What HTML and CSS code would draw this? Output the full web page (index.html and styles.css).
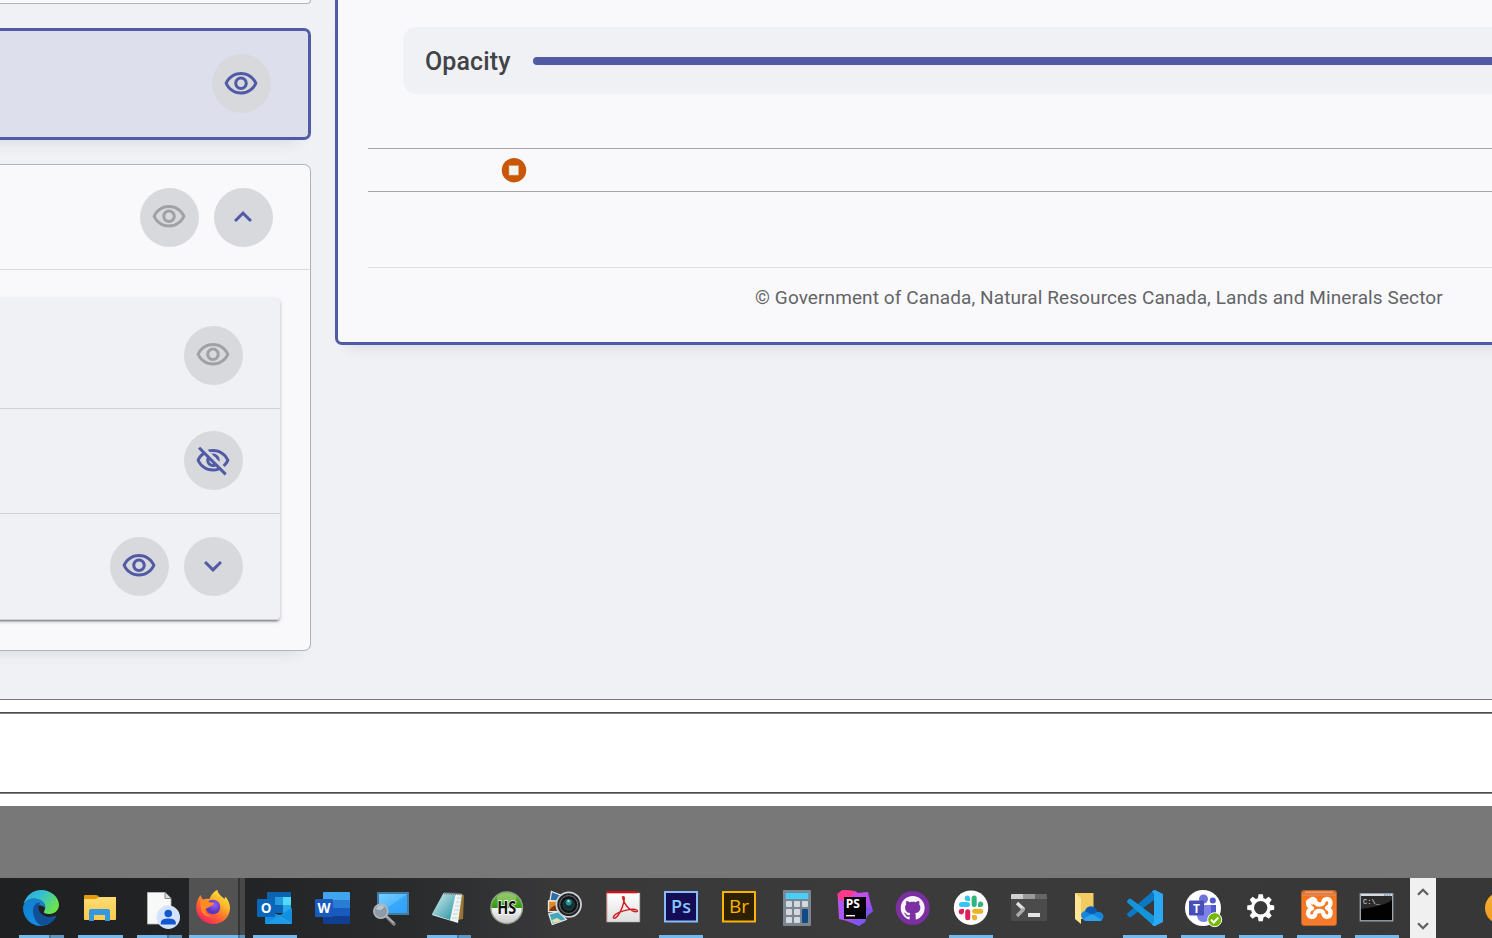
FILE: index.html
```html
<!DOCTYPE html>
<html lang="en">
<head>
<meta charset="utf-8">
<title>Layers</title>
<link rel="stylesheet" href="styles.css">
</head>
<body>
<svg class="defs" aria-hidden="true">
  <defs>
    <symbol id="eye" viewBox="0 0 24 24"><path d="M12 6c3.790 0 7.170 2.130 8.820 5.500C19.170 14.870 15.790 17 12 17s-7.170-2.130-8.820-5.500C4.830 8.130 8.210 6 12 6m0-2C7 4 2.730 7.110 1 11.500 2.730 15.890 7 19 12 19s9.270-3.110 11-7.500C21.270 7.110 17 4 12 4zm0 5c1.380 0 2.500 1.120 2.500 2.500S13.380 14 12 14s-2.500-1.120-2.500-2.500S10.620 9 12 9m0-2c-2.480 0-4.500 2.020-4.500 4.500S9.520 16 12 16s4.500-2.020 4.500-4.500S14.480 7 12 7z"/></symbol>
    <symbol id="eye-off" viewBox="0 0 24 24"><path d="M12 6c3.790 0 7.170 2.130 8.820 5.500-.59 1.220-1.420 2.270-2.410 3.120l1.410 1.410c1.390-1.230 2.490-2.770 3.180-4.530C21.270 7.110 17 4 12 4c-1.270 0-2.490.2-3.640.57l1.650 1.650C10.660 6.090 11.320 6 12 6zm-1.070 1.140L13 9.210c.57.25 1.030.71 1.280 1.280l2.070 2.070c.08-.34.14-.7.14-1.070C16.500 9.010 14.480 7 12 7c-.37 0-.72.05-1.070.14zM2.010 3.870l2.680 2.680C3.060 7.830 1.770 9.530 1 11.500 2.730 15.890 7 19 12 19c1.520 0 2.980-.29 4.320-.82l3.420 3.420 1.410-1.410L3.420 2.450 2.010 3.870zm7.500 7.500l2.610 2.610c-.04.01-.08.02-.12.02-1.380 0-2.500-1.120-2.500-2.500 0-.05.01-.08.01-.13zm-3.400-3.400l1.750 1.750c-.23.55-.36 1.150-.36 1.780 0 2.480 2.020 4.500 4.500 4.500.63 0 1.230-.13 1.770-.36l.98.98c-.88.24-1.800.38-2.750.38-3.790 0-7.170-2.130-8.820-5.500.7-1.430 1.720-2.610 2.930-3.530z"/></symbol>
    <symbol id="less" viewBox="0 0 24 24"><path d="M12 8l-6 6 1.410 1.410L12 10.830l4.590 4.580L18 14z"/></symbol>
    <symbol id="more" viewBox="0 0 24 24"><path d="M16.590 8.590 12 13.170 7.410 8.590 6 10l6 6 6-6z"/></symbol>
    <linearGradient id="edgeTop" x1="0" y1="0" x2="1" y2=".5"><stop offset="0" stop-color="#2ba5e8"/><stop offset=".5" stop-color="#35c1cf"/><stop offset="1" stop-color="#6be34c"/></linearGradient>
    <linearGradient id="edgeLow" x1="0" y1="0" x2=".3" y2="1"><stop offset="0" stop-color="#1380cc"/><stop offset="1" stop-color="#128be0"/></linearGradient>
    <linearGradient id="folder" x1="0" y1="0" x2="0" y2="1"><stop offset="0" stop-color="#ffdc73"/><stop offset="1" stop-color="#fbca4b"/></linearGradient>
    <linearGradient id="fox" x1=".9" y1="0" x2=".2" y2="1"><stop offset="0" stop-color="#fff04a"/><stop offset=".35" stop-color="#ffb52a"/><stop offset=".62" stop-color="#ff6a30"/><stop offset="1" stop-color="#f01a68"/></linearGradient>
    <radialGradient id="foxGlobe" cx=".6" cy=".35"><stop offset="0" stop-color="#9a5cf2"/><stop offset="1" stop-color="#5a37bb"/></radialGradient>
    <linearGradient id="screen" x1="0" y1="0" x2="1" y2="1"><stop offset="0" stop-color="#74cdff"/><stop offset=".5" stop-color="#55b9fb"/><stop offset=".51" stop-color="#39a9fb"/><stop offset="1" stop-color="#2f9ffa"/></linearGradient>
    <linearGradient id="note" x1="0" y1="0" x2="1" y2="1"><stop offset="0" stop-color="#d9f2f3"/><stop offset="1" stop-color="#2591a0"/></linearGradient>
    <linearGradient id="green" x1="0" y1="0" x2="0" y2="1"><stop offset="0" stop-color="#6fb53c"/><stop offset=".5" stop-color="#2f9c0f"/><stop offset=".51" stop-color="#f5f5f5"/><stop offset="1" stop-color="#c9c9c9"/></linearGradient>
    <linearGradient id="paper" x1="0" y1="0" x2="0" y2="1"><stop offset="0" stop-color="#fff"/><stop offset="1" stop-color="#dedede"/></linearGradient>
    <linearGradient id="storm" x1="0" y1="0" x2="1" y2="1"><stop offset="0" stop-color="#ff318c"/><stop offset=".4" stop-color="#c450f0"/><stop offset="1" stop-color="#7748f5"/></linearGradient>
    <linearGradient id="orange" x1="0" y1="0" x2="0" y2="1"><stop offset="0" stop-color="#c9662a"/><stop offset=".14" stop-color="#e98747"/><stop offset=".17" stop-color="#f7751d"/><stop offset="1" stop-color="#f47c2d"/></linearGradient>
    <linearGradient id="sun" x1="0" y1="0" x2="0" y2="1"><stop offset="0" stop-color="#f2b035"/><stop offset="1" stop-color="#f39a1c"/></linearGradient>
  </defs>
</svg>

<main class="viewer">
  <section class="layers">
    <div class="card card-cut"></div>
    <div class="card card-selected">
      <button class="round"><svg class="glyph glyph-level"><use href="#eye"/></svg></button>
    </div>
    <div class="card card-group">
      <div class="group-head">
        <button class="round off"><svg class="glyph"><use href="#eye"/></svg></button>
        <button class="round"><svg class="glyph"><use href="#less"/></svg></button>
      </div>
      <div class="sublist">
        <div class="row"><button class="round off"><svg class="glyph"><use href="#eye"/></svg></button></div>
        <div class="row row-mid"><button class="round"><svg class="glyph glyph-level"><use href="#eye-off"/></svg></button></div>
        <div class="row row-last">
          <button class="round"><svg class="glyph"><use href="#eye"/></svg></button>
          <button class="round"><svg class="glyph"><use href="#more"/></svg></button>
        </div>
      </div>
    </div>
  </section>

  <section class="details">
    <div class="opacity"><span class="opacity-label">Opacity</span><span class="track"></span></div>
    <div class="legend">
      <svg class="marker" viewBox="0 0 26 26"><circle cx="13" cy="13.200" r="12.200" fill="#c85808"/><rect x="8" y="8.700" width="9.600" height="9.400" fill="#f6f3ee" stroke="#c9a37f" stroke-width=".5"/></svg>
    </div>
    <footer class="attribution">© Government of Canada, Natural Resources Canada, Lands and Minerals Sector</footer>
  </section>
</main>

<div class="strip strip-top"></div>
<div class="strip strip-mid"></div>
<div class="strip strip-low"></div>
<div class="desk"></div>

<nav class="taskbar">
  <div class="app wide running multi"><svg class="icon" viewBox="0 0 40 40">
    <path d="M2 20C2 14 8 10 14 10.500c6 .5 10.500 4.500 10 9.500-3-4-11-4-11 3 0 7 5 14.500 11 14.500-1.300.3-2.700.5-4 .5C10 38 2 30 2 20z" fill="url(#edgeLow)"/>
    <path d="M12 22.500c0-4.500 3-8 7.500-8-3 3-2.500 8 .5 11 4 4 9.500 4 14 2.300 1-.4 1.800.2 1.300 1C32 34.500 26.500 38.200 21 37.800c-5.500-1.800-9-8.800-9-15.300z" fill="#114f97"/>
    <path d="M2.500 16C5.500 7 12 2 20 2c10 0 18 7 18 15 0 5-4.500 9-9.500 9-3.500 0-6.500-1-5.500-2.500 2-3.500 1.500-7-1-9.500C17 9 8 9 2.500 16z" fill="url(#edgeTop)"/>
  </svg></div>
  <div class="app wide running"><svg class="icon" viewBox="0 0 40 40">
    <path d="M4 8q0-1 1-1h11q2 0 3 1.500L17 12H4z" fill="#e69a08"/><path d="M4 11h12l3-2h17v22q0 1-1 1H5q-1 0-1-1z" fill="url(#folder)"/>
    <path d="M9 33V23q0-2 2-2h17q2 0 2 2v10h-5v-6h-11v6z" fill="#3498de"/>
  </svg></div>
  <div class="app wide running multi"><svg class="icon" viewBox="0 0 40 40">
    <path d="M8.500 4.500h17.500l6 6V36H8.500z" fill="#f8f8f8" stroke="#b9b9b9" stroke-width=".8"/><path d="M26 4.500v6h6" fill="#ddd" stroke="#888"/>
    <circle cx="29.300" cy="29.300" r="11.700" fill="#d3e3fd"/><circle cx="29.300" cy="25.500" r="3.800" fill="#1158d0"/><path d="M21.800 36.500v-1.700q0-4.300 7.500-4.300t7.500 4.300v1.700z" fill="#1158d0"/>
  </svg></div>
  <div class="app firefox running"><svg class="icon" viewBox="0 0 40 40">
    <path d="M2.500 7c.5 2 1.500 3.500 3 4.500 2-.8 4-.8 6-.2C12.500 7.500 16 3 19.500 2c.5 4 4 6 7 9l1-2.500c3 4 4.700 8 4.500 12C31.500 29.500 24.500 36 15.500 36S-1.500 29.500-1.800 20.500C-2 15.500-.5 11 2.500 7z" fill="url(#fox)"/>
    <circle cx="15" cy="19" r="7.300" fill="url(#foxGlobe)"/><path d="M2 13c4-1.500 7-1 9 1 2 .5 4 .6 5 1.200-.5 2-2.500 2.800-4.700 3.500-.8 1-1.800 1.300-3.300 1.800C6 24 9 28 14 28c-5 2-10-2-11-7-.5-3-.5-5-1-8z" fill="#ff8b24"/>
  </svg></div>
  <div class="app running"><svg class="icon" viewBox="0 0 40 40">
    <path d="M12 5q0-1 1-1h22q1 0 1 1v20H12z" fill="#0e63ae"/><path d="M20 9h8v8h-8z" fill="#289bdd"/><path d="M28 9h8v8h-8z" fill="#54d9fb"/><path d="M20 17h8v8h-8z" fill="#0b65b9"/><path d="M28 17h8v6l-8 4z" fill="#28a8ea"/>
    <path d="M10 25h8l7 2 12-7v15q0 1-1 1H11q-1 0-1-1z" fill="#1290df"/><path d="M11 36l13-9 13 9z" fill="#27a7f0"/><path d="M10 36l13-9 12 9z" fill="#168bdc" opacity=".45"/>
    <rect x="2" y="11" width="18" height="18" rx="1.200" fill="#0a66bd"/><text x="11" y="24.500" class="t-o">O</text>
  </svg></div>
  <div class="app"><svg class="icon" viewBox="0 0 40 40">
    <path d="M10 5q0-1 1-1h25q1 0 1 1v7H10z" fill="#41a5ee"/><path d="M10 12h27v8H10z" fill="#2b7cd3"/><path d="M10 20h27v8H10z" fill="#185abd"/><path d="M10 28h27v7q0 1-1 1H11q-1 0-1-1z" fill="#103f91"/>
    <rect x="2" y="11" width="18" height="18" rx="1.200" fill="#185abd"/><text x="11" y="24.500" class="t-o">W</text>
  </svg></div>
  <div class="app"><svg class="icon" viewBox="0 0 40 40">
    <rect x="6" y="4" width="32" height="23" fill="#427ca0"/><rect x="8" y="6" width="28" height="19" fill="url(#screen)"/>
    <path d="M15 28l8 8" stroke="#7d8287" stroke-width="3.400" stroke-linecap="round"/><path d="M15 28l8 7" stroke="#b4bac0" stroke-width="1.200"/>
    <circle cx="9.800" cy="23.200" r="7" fill="#8d9ba8" stroke="#b3b8bd" stroke-width="1.600"/><path d="M5 21a5.500 5.500 0 0 1 8-3c-1 4-4 5-8 3z" fill="#bac5ce"/>
  </svg></div>
  <div class="app running multi"><svg class="icon" viewBox="0 0 40 40">
    <path d="M30 6l5 1-1 24-6 1z" fill="#9b7535"/><path d="M15 5l18 1-4 29L3 27z" fill="#eef6f5"/><path d="M14.500 5l12 1.500L21 32 3 26z" fill="url(#note)"/>
    <path d="M28 10h4M27 14h4M26 18h5M25 22h5M24 26h5M23 30h5" stroke="#b8cbca" stroke-width=".8"/><path d="M15 5.200l18 1" stroke="#70797a" stroke-width="2.200" stroke-dasharray="1.400 .8"/>
  </svg></div>
  <div class="app"><svg class="icon" viewBox="0 0 40 40">
    <circle cx="19.700" cy="19.700" r="15.800" fill="url(#green)" stroke="#92a08b" stroke-width="1.400"/><ellipse cx="19.700" cy="10" rx="10" ry="5" fill="#b8dc93" opacity=".5"/>
    <text x="19.700" y="26" class="t-hs" textLength="19" lengthAdjust="spacingAndGlyphs">HS</text>
  </svg></div>
  <div class="app"><svg class="icon" viewBox="0 0 40 40">
    <path d="M6.500 3.500l10 4-2 7-9.500-2z" fill="#2e6ea3" stroke="#e9e9e9" stroke-width="1.300"/><path d="M3.500 13h10v10.500h-10z" fill="#df8a20" stroke="#e9e9e9" stroke-width="1.300"/><path d="M3.800 26l10-2.500 7.500 8-14 5z" fill="#41a7bf" stroke="#e9e9e9" stroke-width="1.300"/><path d="M6 20l4-3 4 4v2H4z" fill="#7c3612"/><path d="M7 32l5-2 5 3-9 2z" fill="#e6ddab"/>
    <circle cx="23.700" cy="16.600" r="12.300" fill="#202326" stroke="#cfd2d4" stroke-width="1.800"/><circle cx="23.700" cy="16.600" r="9" fill="#111416" stroke="#70777b"/><circle cx="23.700" cy="16.600" r="5.500" fill="#122f36" stroke="#344"/><circle cx="23.700" cy="14.500" r="3" fill="#269197"/><circle cx="23.500" cy="13" r="1.200" fill="#96e4df"/>
  </svg></div>
  <div class="app"><svg class="icon" viewBox="0 0 40 40">
    <path d="M3.500 5h33.300v29H3.500z" fill="url(#paper)" stroke="#aaa" stroke-width=".6"/><path d="M3.300 3h31v2.200h-31z" fill="#d80e11"/><path d="M3.800 4v30" stroke="#b54b4b" stroke-width=".7"/>
    <path d="M19.500 9c2-1.200 2.200 1 1.300 5-1.300 6-5.500 15-8.800 16.200-3 .5-2-3 3.500-5.500 6-2.600 15-4.700 18.300-2.700 2 1.800-1.300 2.200-3.800 1-5-2-8.800-7.500-9.800-11.500C19.800 10 19.500 9.500 19.500 9z" fill="none" stroke="#cf1d20" stroke-width="1.400"/>
  </svg></div>
  <div class="app running"><svg class="icon" viewBox="0 0 40 40">
    <rect x="4" y="4" width="32" height="29.500" fill="#140c55" stroke="#84bdf7" stroke-width="2"/><text x="20" y="24.500" class="t-ps">Ps</text>
  </svg></div>
  <div class="app"><svg class="icon" viewBox="0 0 40 40">
    <rect x="4" y="4" width="32" height="29.500" fill="#2d2000" stroke="#fab400" stroke-width="2"/><text x="20" y="25" class="t-br">Br</text>
  </svg></div>
  <div class="app"><svg class="icon" viewBox="0 0 40 40">
    <rect x="6" y="2" width="28" height="36" rx="1" fill="#7c8690"/><rect x="8.700" y="5" width="22.600" height="6" fill="#46cff7"/>
    <g fill="#d4d9df"><rect x="9" y="13" width="6" height="6" rx="1"/><rect x="17" y="13" width="6" height="6" rx="1"/><rect x="25" y="13" width="6" height="6" rx="1"/><rect x="9" y="21" width="6" height="6" rx="1"/><rect x="17" y="21" width="6" height="6" rx="1"/><rect x="9" y="29" width="6" height="6" rx="1"/><rect x="17" y="29" width="6" height="6" rx="1"/></g><rect x="25" y="21" width="6" height="14" rx="1" fill="#124a87"/>
  </svg></div>
  <div class="app"><svg class="icon" viewBox="0 0 40 40">
    <path d="M2.500 6l5-4L20 3l3 2 10-1 2 9 3 10-6 5-2 6-6 4-12-5-8-2z" fill="url(#storm)"/><path d="M2.500 6l5-4L20 3l-5 7H9l-3 6z" fill="#ff3a8b"/><path d="M3 10l6 5v16l-4-1z" fill="#a35bf2"/><path d="M31 18l7 5-6 5-2 6-6 4-10-5 17-2z" fill="#7d55ef"/>
    <rect x="9" y="9" width="22" height="22" fill="#050208"/><text x="10.800" y="20" class="t-storm">PS</text><path d="M11 27h9v1.400h-9z" fill="#fff"/>
  </svg></div>
  <div class="app"><svg class="icon" viewBox="0 0 40 40">
    <circle cx="19.700" cy="20" r="17" fill="#7b2fa0"/><path transform="translate(7.700 8) scale(1.500)" fill="#f7f4f9" d="M8 0C3.580 0 0 3.580 0 8c0 3.540 2.290 6.530 5.470 7.590.4.070.55-.17.55-.38 0-.19-.01-.82-.01-1.490-2.010.37-2.530-.49-2.690-.94-.09-.23-.48-.94-.82-1.130-.28-.15-.68-.52-.01-.53.63-.01 1.080.58 1.230.82.72 1.210 1.870.87 2.330.66.070-.52.28-.87.51-1.070-1.780-.2-3.640-.89-3.640-3.950 0-.87.31-1.590.82-2.150-.08-.2-.36-1.020.08-2.120 0 0 .67-.21 2.200.82.64-.18 1.320-.27 2-.27s1.360.09 2 .27c1.530-1.040 2.200-.82 2.200-.82.44 1.100.16 1.920.08 2.120.51.56.82 1.270.82 2.150 0 3.070-1.870 3.750-3.650 3.950.29.25.54.73.54 1.480 0 1.070-.01 1.930-.01 2.200 0 .21.15.46.55.38A8.010 8.010 0 0 0 16 8c0-4.420-3.580-8-8-8z"/>
  </svg></div>
  <div class="app running"><svg class="icon" viewBox="0 0 40 40">
    <circle cx="20" cy="19.700" r="17.200" fill="#fdfdfd"/>
    <g stroke-width="5" stroke-linecap="round"><path d="M10.500 16.500h6" stroke="#36c5f0"/><path d="M23.200 10v6.500" stroke="#2eb67d"/><path d="M23.700 23.200h6" stroke="#ecb22e"/><path d="M16.700 23.700v6" stroke="#e01e5a"/></g>
    <path d="M19 13h-3a2.700 2.700 0 1 1 3-3z" fill="#36c5f0"/><path d="M27 19v-3a2.700 2.700 0 1 1 3 3z" fill="#2eb67d"/><path d="M21 27h3a2.700 2.700 0 1 1-3 3z" fill="#ecb22e"/><path d="M13 21v3a2.700 2.700 0 1 1-3-3z" fill="#e01e5a"/>
  </svg></div>
  <div class="app"><svg class="icon" viewBox="0 0 40 40">
    <path d="M2 11h36v21q0 1-1 1H3q-1 0-1-1z" fill="#4b4b4b"/><path d="M3 6h11v5H2V7q0-1 1-1z" fill="#cfcfcf"/><path d="M14 6h12v5H14z" fill="#999"/><path d="M26 6h11q1 0 1 1v4H26z" fill="#666"/>
    <path d="M8 15l7 6.500" stroke="#e0e0e0" stroke-width="3.400"/><path d="M15 20.800L8 28" stroke="#aaa" stroke-width="3.400"/><rect x="19" y="25" width="12" height="4" fill="#e3e3e3"/>
  </svg></div>
  <div class="app"><svg class="icon" viewBox="0 0 40 40">
    <path d="M8 5h18.500v26H14z" fill="#f2cb62"/><path d="M8 5l6 5v26l-6-5z" fill="#ffe594"/>
    <path d="M15 29.500c-2-3 0-6 3-6.500 1-4 6-6 9.500-3 1.500 1 2 2.500 2.500 4 4-.5 6.500 1.500 6.500 4.500 0 2.500-2 4.500-4.500 4.500H20c-2.500 0-4-1.200-5-3.500z" fill="#1685dc"/><path d="M18 23c1-4 6-6 9.500-3 1.500 1 2 2.500 2.500 4l-5 3z" fill="#0a5bb5"/><path d="M16 31l9-5 10 6q-1 1-3 1H20q-3 0-4-2z" fill="#2ba4ee"/>
  </svg></div>
  <div class="app running"><svg class="icon" viewBox="0 0 40 40">
    <path d="M29 2v10L6 29q-1.200.8-2.200 0L2.500 27.500q-1-1.200 0-2.200z" fill="#0b78c5"/><path d="M29 38V28L6 11q-1.200-.8-2.200 0L2.500 12.500q-1 1.200 0 2.200z" fill="#1394db"/><path d="M27 3.500Q28 2 30 2l8 4v28l-8 4q-2 0-3-1.500l2-2V5.500z" fill="#2ba9f3"/>
  </svg></div>
  <div class="app running"><svg class="icon" viewBox="0 0 40 40">
    <circle cx="20" cy="20" r="18" fill="#fff"/><circle cx="20.500" cy="11" r="4.500" fill="#6b75d8"/><circle cx="29.800" cy="12.500" r="3" fill="#5059c9"/><path d="M26 17h7v9q0 4-5 5z" fill="#5059c9"/><path d="M14 17h14v10q-1 7-7 7t-7-6z" fill="#7b83eb"/>
    <rect x="6" y="12.500" width="15" height="15" rx="1" fill="#464eb8"/><text x="13.500" y="24.500" class="t-team">T</text>
    <circle cx="31.700" cy="31.700" r="7" fill="#75b900" stroke="#fff"/><path d="M28 31.700l2.700 2.800 4.700-5" fill="none" stroke="#fff" stroke-width="1.900"/>
  </svg></div>
  <div class="app running"><svg class="icon" viewBox="0 0 40 40">
    <g transform="translate(19.700 19.700)"><circle r="8.300" fill="none" stroke="#fff" stroke-width="3.200"/><g fill="#fff"><path id="tooth" d="M-2.900-9.200l.8-4.300h4.200l.8 4.300z"/><use href="#tooth" transform="rotate(45)"/><use href="#tooth" transform="rotate(90)"/><use href="#tooth" transform="rotate(135)"/><use href="#tooth" transform="rotate(180)"/><use href="#tooth" transform="rotate(225)"/><use href="#tooth" transform="rotate(270)"/><use href="#tooth" transform="rotate(315)"/></g></g>
  </svg></div>
  <div class="app running"><svg class="icon" viewBox="0 0 40 40">
    <rect x="2.500" y="2.500" width="35" height="35" rx="2.500" fill="url(#orange)" stroke="#bf6125"/><path d="M6 4.200h28" stroke="#ee9c72" stroke-width="1.600"/>
    <path d="M13.500 14.500c-1-3.500-5-2-4.200 1.500.4 2 2 3.500 3.700 4.200-3 1.300-4.500 4-3.700 6.300 1.200 3.200 6.200 3 6.900-.5.300-2 1-3 4.300-3s3.500 1 4 3c.8 3.500 5.800 3.600 6.800.4.800-2.500-.3-5-3.300-6.400 2.500-1.400 4-4 3.200-6.500-1.200-3.300-6-3.300-6.800.4-.4 2-1.200 2.600-3.900 2.600s-3.600-.8-4-2.500c-.5-3.400-3-3.600-4.500-2.400" fill="none" stroke="#fff" stroke-width="4.400" stroke-linecap="round" stroke-linejoin="round"/>
  </svg></div>
  <div class="app running"><svg class="icon" viewBox="0 0 40 40">
    <rect x="3.300" y="5.800" width="32.400" height="27" fill="#020202" stroke="#a4acb2" stroke-width="1.300"/><path d="M4 6h31v2H4z" fill="#d6dce1"/><path d="M27 7h7" stroke="#4169a5" stroke-width="1.200" stroke-dasharray="1.500 1"/><path d="M4 8h31v4Q28 18 4 21z" fill="#2b2b2b"/><text x="6" y="15.500" class="t-cmd">C:\_</text>
  </svg></div>
  <div class="scroller">
    <svg class="arrow" viewBox="0 0 12 8"><path d="M1 6.800l5-5 5 5"/></svg>
    <svg class="arrow" viewBox="0 0 12 8"><path d="M1 1.200l5 5 5-5"/></svg>
  </div>
  <svg class="tray" viewBox="0 0 36 36"><circle cx="16" cy="18" r="16" fill="url(#sun)"/></svg>
</nav>
</body>
</html>
```
FILE: styles.css
```css
* { box-sizing: border-box; }
body {
  margin: 0;
  width: 1492px;
  height: 938px;
  display: flex;
  flex-direction: column;
  overflow: hidden;
  background: #fff;
  font-family: Roboto, "Liberation Sans", sans-serif;
}
.defs { position: absolute; width: 0; height: 0; }

.viewer {
  display: flex;
  align-items: flex-start;
  gap: 24px;
  height: 699px;
  background: #f0f1f5;
  overflow: hidden;
}
.layers { width: 341px; margin-left: -30px; display: flex; flex-direction: column; gap: 24px; flex: none; }
.card {
  background: #f9f9fc;
  border: 1px solid #b3b4b8;
  border-left: 0;
  border-radius: 0 7px 7px 0;
  box-shadow: 0 12px 16px -12px rgba(0, 0, 0, .12);
}
.card-cut { height: 4px; border-top: 0; border-radius: 0 0 7px 0; }
.card-selected {
  height: 112px;
  display: flex;
  justify-content: flex-end;
  align-items: center;
  padding: 0 37px 1px 0;
  border: 3px solid #515ba5;
  border-left: 0;
  background: #dedfec;
}
.card-group { height: 487px; padding-bottom: 30px; display: flex; flex-direction: column; }
.group-head {
  height: 105px;
  padding: 0 37px 0 0;
  display: flex;
  justify-content: flex-end;
  align-items: center;
  gap: 15px;
  border-bottom: 1px solid #dadbdd;
}
.sublist {
  margin: 29px 30px 0 0;
  padding-top: 4px;
  background: #f0f1f5;
  border-radius: 0 4px 4px 0;
  box-shadow: 0 3px 1px -2px rgba(0, 0, 0, .2), 0 2px 2px rgba(0, 0, 0, .22), 0 1px 5px rgba(0, 0, 0, .15);
}
.row {
  height: 105px;
  padding-right: 37px;
  display: flex;
  justify-content: flex-end;
  align-items: center;
  gap: 15px;
  border-bottom: 1px solid #d1d2d6;
}
.row:first-child { height: 106px; }
.row-mid { padding-bottom: 1px; }
.row-last { height: 106px; border-radius: 0 0 4px 0; }
.round {
  width: 59px;
  height: 59px;
  padding: 0;
  border: 0;
  border-radius: 50%;
  background: #d8d9dd;
  color: #515ba5;
  display: flex;
  align-items: center;
  justify-content: center;
}
.round.off { color: #a0a1a3; }
.glyph { width: 36px; height: 36px; fill: currentColor; margin: 0 1px 1px 0; }
.glyph-level { margin: 1px 1px 0 0; }

.details {
  flex: none;
  width: 1187px;
  height: 345px;
  padding: 27px 0 0 30px;
  border: solid #515ba5;
  border-width: 0 0 3px 3px;
  border-radius: 0 0 0 7px;
  background: #f9f9fc;
  box-shadow: 0 12px 16px -12px rgba(0, 0, 0, .12);
}
.opacity {
  height: 67px;
  margin-left: 35px;
  padding-left: 22px;
  display: flex;
  align-items: center;
  border-radius: 14px 0 0 14px;
  background: #f0f1f5;
}
.opacity-label { width: 108px; font-size: 25px; font-weight: 500; line-height: 30px; letter-spacing: .12px; color: #424345; padding-top: 3px; }
.track { flex: 1; height: 8px; border-radius: 4px 0 0 4px; background: #515ba5; }
.legend {
  height: 44px;
  margin-top: 54px;
  padding: 8px 0 0 133px;
  border: solid #a5a6a9;
  border-width: 1px 0;
}
.marker { width: 26px; height: 26px; display: block; }
.attribution {
  margin-top: 75px;
  padding: 18px 0 0 387px;
  border-top: 1px solid #dcdde0;
  font-size: 19px;
  line-height: 24px;
  letter-spacing: .1px;
  white-space: nowrap;
  color: #636466;
}

.strip { background: #fff; }
.strip-top { height: 13px; border-top: 1px solid #777; }
.strip-mid { height: 80px; border-top: 1px solid #4b4b4b; box-shadow: inset 0 1px #808080; }
.strip-low { height: 14px; border-top: 1px solid #4b4b4b; box-shadow: inset 0 1px #808080; }
.desk { height: 72px; background: #787878; }

.taskbar {
  height: 60px;
  padding-left: 12px;
  display: flex;
  background: linear-gradient(90deg, #1f2021 0, #222425 250px, #292b2d 410px, #39393a 560px, #3b3b3c 900px, #373738 1492px);
}
.app { width: 58px; height: 60px; flex: none; padding: 10px 0 0 9px; position: relative; }
.app.wide { width: 59px; }
.icon { width: 40px; height: 40px; display: block; overflow: visible; }
.running::after {
  content: "";
  position: absolute;
  left: 7px;
  bottom: 0;
  width: 44px;
  height: 3px;
  background: #76b9ed;
}
.wide.running::after { width: 45px; }
.multi::after, .wide.multi::after { background: linear-gradient(90deg, #76b9ed 30px, #4d7698 30px, #4d7698 32px, #5f97c4 32px); }
.app.firefox { width: 57px; background: linear-gradient(90deg, #525252 49px, #343434 49px, #343434 51px, #484848 51px, #484848 56px, transparent 56px); }
.app.firefox::after { left: 0; width: 56px; background: linear-gradient(90deg, #76b9ed 49px, #4d7698 49px, #4d7698 51px, #5f97c4 51px); }
.scroller {
  flex: none;
  width: 26px;
  height: 60px;
  margin-left: 4px;
  padding: 10px 0 8px;
  display: flex;
  flex-direction: column;
  align-items: center;
  justify-content: space-between;
  background: #f0f0f0;
}
.arrow { width: 12px; height: 8px; fill: none; stroke: #606060; stroke-width: 2.3; }
.tray { width: 36px; height: 36px; margin: 12px 0 0 49px; flex: none; }

text { font-family: "Open Sans", sans-serif; text-anchor: middle; }
.t-o { font-size: 13.5px; font-weight: 700; fill: #fff; }
.t-hs { font-size: 17px; font-weight: 700; fill: #111; stroke: #fff; stroke-width: 1.5px; paint-order: stroke; }
.t-ps { font-size: 18px; font-weight: 600; fill: #8ac4fb; }
.t-br { font-size: 19px; font-weight: 500; fill: #fab400; }
.t-storm { font-size: 12px; font-weight: 700; fill: #fff; text-anchor: start; }
.t-team { font-size: 12px; font-weight: 700; fill: #fff; }
.t-cmd { font-family: "Liberation Mono", monospace; font-size: 7px; fill: #e6e6e6; text-anchor: start; }
```
